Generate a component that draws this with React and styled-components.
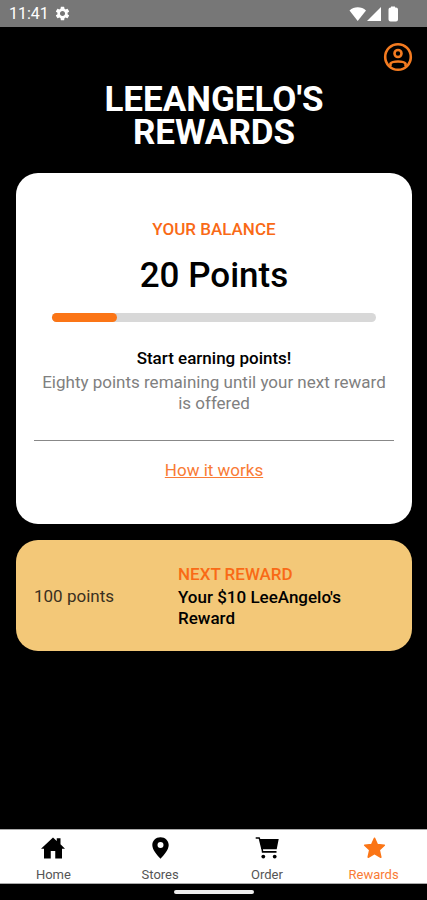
import React from 'react'
import styled, { createGlobalStyle } from 'styled-components'
import { MdSettings } from 'react-icons/md'
import { IoHomeSharp } from 'react-icons/io5'

const GlobalStyle = createGlobalStyle`
  * {
    box-sizing: border-box;
  }

  body {
    margin: 0;
    background: #000;
    font-family: Roboto, "Liberation Sans", sans-serif;
  }

  h1, h2, p {
    margin: 0;
  }
`;

const Screen = styled.div`
  min-height: 100vh;
  display: flex;
  flex-direction: column;
  background: #000;
`;

const StatusBar = styled.div`
  height: 27px;
  padding: 0 28px 0 9px;
  display: flex;
  align-items: center;
  justify-content: space-between;
  background: #777;
  color: #fff;
  font-size: 16px;
`;

const StatusGroup = styled.div`
  display: flex;
  align-items: center;
  gap: 5px;
`;

const TopBar = styled.header`
  display: flex;
  justify-content: flex-end;
  padding: 13px 12px 0;
`;

const ProfileButton = styled.button`
  display: flex;
  padding: 0;
  border: 0;
  background: none;
  color: #f47b20;
  cursor: pointer;
`;

const Content = styled.main`
  flex: 1;
  display: flex;
  flex-direction: column;
  gap: 16px;
  padding: 9px 15px 16px 16px;
`;

const Title = styled.h1`
  max-width: 260px;
  margin: 0 auto;
  padding-bottom: 8px;
  color: #fff;
  font-size: 35px;
  font-weight: 700;
  line-height: 33px;
  text-align: center;
`;

const Card = styled.section`
  border-radius: 22px;
  background: ${({ $tone }) => ($tone === 'gold' ? '#f3c878' : '#fff')};
`;

const BalanceCard = styled(Card)`
  padding: 46px 18px 43px;
  text-align: center;
`;

const Label = styled.h2`
  color: #f96a16;
  font-size: 17px;
  font-weight: 500;
  line-height: 21px;
`;

const Points = styled.p`
  margin-top: 16px;
  font-size: 35px;
  font-weight: 500;
  line-height: 40px;
`;

const Track = styled.div`
  height: 9px;
  margin: 17px 18px 24px;
  border-radius: 5px;
  background: #d8d8d8;
`;

const Fill = styled.div`
  height: 100%;
  border-radius: 5px;
  background: #fb7516;
`;

const Strong = styled.p`
  padding-top: 2px;
  color: #000;
  font-size: 17px;
  font-weight: 500;
  line-height: 21px;
`;

const Hint = styled.p`
  padding: 3px 4px 0;
  color: #808080;
  font-size: 17px;
  font-weight: 400;
  line-height: 21px;
`;

const Divider = styled.hr`
  height: 1px;
  margin: 26px 0 19px;
  border: 0;
  background: #888;
`;

const HelpLink = styled.a`
  color: #f97b35;
  font-size: 17px;
  font-weight: 400;
  line-height: 21px;
`;

const RewardCard = styled(Card)`
  display: grid;
  grid-template-columns: 2fr 3fr;
  align-items: center;
  padding: 24px 18px 22px;
`;

const Cost = styled.p`
  color: #3a3020;
  font-size: 17px;
  font-weight: 400;
  line-height: 21px;
`;

const TabBar = styled.nav`
  display: grid;
  grid-template-columns: repeat(4, 1fr);
  height: 55px;
  border-top: 1px solid #aaa;
  border-bottom: 1px solid #aaa;
  background: #fff;
`;

const Tab = styled.a`
  display: flex;
  flex-direction: column;
  align-items: center;
  gap: 7px;
  padding-top: 6px;
  color: ${({ $active }) => ($active ? '#f97b35' : '#555')};
  font-size: 13px;
  font-weight: 400;
  line-height: 16px;
  text-decoration: none;

  svg {
    color: ${({ $active }) => ($active ? '#fb7516' : '#000')};
  }
`;

const GestureArea = styled.div`
  height: 16px;
  display: flex;
  align-items: center;
  justify-content: center;
`;

const GesturePill = styled.div`
  width: 80px;
  height: 4px;
  border-radius: 2px;
  background: #eee;
`;

const StatusIcons = () => (
  <svg width="50" height="16" viewBox="0 0 50 16" fill="#fff" aria-hidden="true">
    <path d="M0.5 4.5C5 0.2 12.500 0.200 17 4.500L8.700 15Z" />
    <path d="M32 1V15H18Z" />
    <path d="M42 1.500V0.500H46V1.500H47Q49 1.500 49 3.500V13.500Q49 15.500 47 15.500H41.500Q39.500 15.500 39.500 13.500V3.500Q39.500 1.500 41.500 1.500Z" />
  </svg>
)

const ProfileIcon = () => (
  <svg width="34" height="34" viewBox="0 0 34 34" fill="none" stroke="currentColor" strokeWidth="2.600">
    <circle cx="17" cy="17" r="12.800" />
    <circle cx="17" cy="13.500" r="3.500" />
    <path d="M9.500 25.500V23.500C10.800 21.800 13 21.500 17 21.500S23.200 21.800 24.500 23.500V25.500" strokeLinecap="round" strokeLinejoin="round" />
  </svg>
)

const PinIcon = ({ size }) => (
  <svg width={size} height={size} viewBox="0 0 24 24" fill="currentColor">
    <path fillRule="evenodd" d="M12.500 1.200C7.800 1.200 4.300 4.600 4.300 9C4.300 14 9 19 12.500 22.800C16 19 20.700 14 20.700 9C20.700 4.600 17.200 1.200 12.500 1.200ZM12.500 6A3 3 0 1 1 12.500 12A3 3 0 1 1 12.500 6Z" />
  </svg>
)

const CartIcon = ({ size }) => (
  <svg width={size} height={size} viewBox="0 0 24 24" fill="currentColor">
    <path d="M0.700 1.200H4.700L5.300 3H23.700L21.700 13.300H6.300L3.700 2.700H0.700Z" />
    <path d="M6.300 12H7.800L8.200 15H21.500V16.700H6.900Z" />
    <circle cx="8.300" cy="20.600" r="1.900" />
    <circle cx="19.700" cy="20.600" r="1.900" />
  </svg>
)

const StarIcon = ({ size }) => (
  <svg width={size} height={size} viewBox="0 0 24 24" fill="currentColor" stroke="currentColor" strokeWidth="1.600" strokeLinejoin="round">
    <path d="M12.500 2.300L15.300 8.600L22.300 9.200L17.200 14L18.800 21.200L12.500 17.600L6.200 21.200L7.800 14L2.700 9.200L9.700 8.600Z" />
  </svg>
)

const tabs = [
  { name: 'Home', icon: IoHomeSharp },
  { name: 'Stores', icon: PinIcon },
  { name: 'Order', icon: CartIcon },
  { name: 'Rewards', icon: StarIcon },
]

const App = () => {
  const points = 20
  const goal = 100

  return (
    <>
      <GlobalStyle />
      <Screen>
        <StatusBar>
          <StatusGroup>
            <span>11:41</span>
            <MdSettings size={17} />
          </StatusGroup>
          <StatusIcons />
        </StatusBar>

        <TopBar>
          <ProfileButton aria-label="Profile">
            <ProfileIcon />
          </ProfileButton>
        </TopBar>

        <Content>
          <Title>LEEANGELO'S REWARDS</Title>

          <BalanceCard>
            <Label>YOUR BALANCE</Label>
            <Points>{points} Points</Points>
            <Track>
              <Fill style={{ width: `${(points / goal) * 100}%` }} />
            </Track>
            <Strong>Start earning points!</Strong>
            <Hint>Eighty points remaining until your next reward is offered</Hint>
            <Divider />
            <HelpLink href="#how">How it works</HelpLink>
          </BalanceCard>

          <RewardCard $tone="gold">
            <Cost>{goal} points</Cost>
            <div>
              <Label>NEXT REWARD</Label>
              <Strong>Your $10 LeeAngelo's Reward</Strong>
            </div>
          </RewardCard>
        </Content>

        <TabBar>
          {tabs.map(({ name, icon: Icon }) => (
            <Tab key={name} href={`#${name.toLowerCase()}`} $active={name === 'Rewards'}>
              <Icon size={24} />
              {name}
            </Tab>
          ))}
        </TabBar>
        <GestureArea>
          <GesturePill />
        </GestureArea>
      </Screen>
    </>
  )
}

export default App
